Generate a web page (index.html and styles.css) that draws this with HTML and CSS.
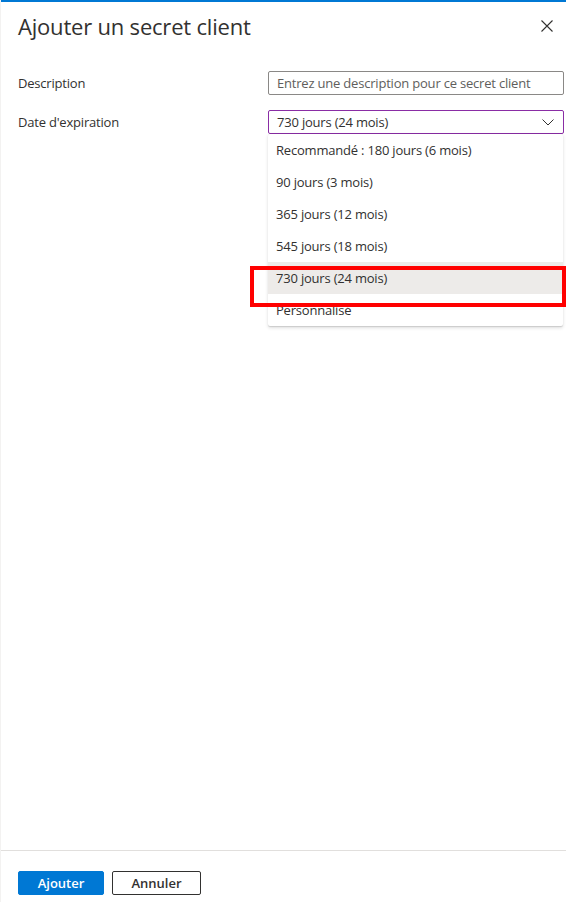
FILE: index.html
```html
<!DOCTYPE html>
<html lang="fr">
<head>
<meta charset="utf-8">
<link rel="stylesheet" href="styles.css">
</head>
<body>
<div class="panel">
  <div class="topbar"></div>
  <header class="header">
    <h1 class="title">Ajouter un secret client</h1>
    <button class="close" aria-label="Fermer">
      <svg width="12" height="12" viewBox="0 0 12 12"><path d="M0.5 0.5 L11.5 11.5 M11.5 0.5 L0.5 11.5" stroke="#323130" stroke-width="1.1" fill="none"/></svg>
    </button>
  </header>
  <main class="body">
    <div class="row">
      <label class="label">Description</label>
      <div class="field">
        <div class="input placeholder">Entrez une description pour ce secret client</div>
      </div>
    </div>
    <div class="row">
      <label class="label">Date d'expiration</label>
      <div class="field">
        <div class="select">
          <span>730 jours (24 mois)</span>
          <svg class="chev" width="12" height="7" viewBox="0 0 12 7"><path d="M0.5 0.5 L6 6 L11.5 0.5" stroke="#323130" stroke-width="1" fill="none"/></svg>
        </div>
        <ul class="menu">
          <li class="item">Recommandé : 180 jours (6 mois)</li>
          <li class="item">90 jours (3 mois)</li>
          <li class="item">365 jours (12 mois)</li>
          <li class="item">545 jours (18 mois)</li>
          <li class="item selected">730 jours (24 mois)</li>
          <li class="item">Personnalisé</li>
        </ul>
        <div class="highlight"></div>
      </div>
    </div>
  </main>
  <footer class="footer">
    <button class="btn primary">Ajouter</button>
    <button class="btn secondary">Annuler</button>
  </footer>
</div>
</body>
</html>
```
FILE: styles.css
```css
* { box-sizing: border-box; }
html, body { margin: 0; padding: 0; }
body {
  width: 566px;
  height: 902px;
  background: #fff;
  font-family: "Segoe UI", "Open Sans", "Noto Sans", sans-serif;
  color: #323130;
  overflow: hidden;
}
.panel {
  height: 902px;
  display: flex;
  flex-direction: column;
  border-left: 1px solid #f3f2f1;
}
.topbar {
  height: 2px;
  background: #0078d4;
  flex: none;
}
.header {
  display: flex;
  justify-content: space-between;
  align-items: center;
  padding: 0 12px 0 17px;
  height: 48px;
  flex: none;
}
.title {
  margin: 0;
  font-size: 22px;
  font-weight: 400;
  letter-spacing: -0.2px;
  line-height: 32px;
}
.close {
  border: 0;
  background: none;
  padding: 0;
  width: 14px;
  height: 14px;
  display: flex;
  align-items: center;
  justify-content: center;
}
.body {
  flex: 1;
  padding: 21px 2px 0 17px;
  display: flex;
  flex-direction: column;
  gap: 15px;
}
.row {
  display: flex;
  align-items: flex-start;
  font-size: 13px;
  letter-spacing: -0.2px;
}
.label {
  width: 250px;
  line-height: 24px;
}
.field {
  position: relative;
  width: 296px;
}
.input, .select {
  height: 24px;
  border: 1px solid #8a8886;
  border-radius: 2px;
  padding: 0 8px;
  line-height: 22px;
  white-space: nowrap;
}
.placeholder { color: #605e5c; }
.select {
  border-color: #8a2da5;
  display: flex;
  justify-content: space-between;
  align-items: center;
  padding-right: 9px;
}
.menu {
  position: absolute;
  top: 24px;
  left: 0;
  width: 295px;
  margin: 0;
  padding: 0;
  list-style: none;
  background: #fff;
  box-shadow: 0 1.6px 3.6px rgba(0,0,0,0.13), 0 0.3px 0.9px rgba(0,0,0,0.11);
  border-radius: 2px;
}
.item {
  height: 32px;
  line-height: 32px;
  padding: 0 8px;
}
.item.selected { background: #edebe9; }
.highlight {
  position: absolute;
  left: -18px;
  top: 156px;
  width: 316px;
  height: 41px;
  border: 4px solid #ff0000;
}
.footer {
  border-top: 1px solid #e1dfdd;
  height: 52px;
  padding: 20px 0 0 17px;
  display: flex;
  gap: 8px;
  align-items: flex-start;
  flex: none;
}
.btn {
  height: 24px;
  border-radius: 2px;
  font-family: inherit;
  font-size: 13px;
  font-weight: 600;
  padding: 0;
}
.primary {
  width: 86px;
  background: #0078d4;
  border: 1px solid #0078d4;
  color: #fff;
}
.secondary {
  width: 89px;
  background: #fff;
  border: 1px solid #323130;
  color: #323130;
}
```
